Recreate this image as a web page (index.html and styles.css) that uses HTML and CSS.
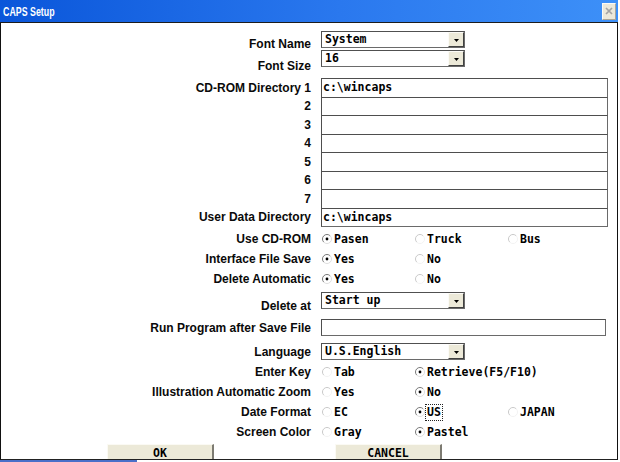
FILE: index.html
```html
<!DOCTYPE html>
<html>
<head>
<meta charset="utf-8">
<link rel="stylesheet" href="styles.css">
</head>
<body>
<div class="window">
  <div class="titlebar">
    <span class="title">CAPS Setup</span>
    <span class="close"><svg width="8" height="8" viewBox="0 0 8 8"><path d="M1 1L7 7M7 1L1 7" stroke="#a3a3a3" stroke-width="1.7"/></svg></span>
  </div>
  <div class="body">
    <div class="row sel r-fn"><span class="lbl low9">Font Name</span><div class="select"><span class="val">System</span><span class="arrow"><svg width="5" height="3" viewBox="0 0 5 3"><path d="M0 0H5L2.5 3Z" fill="#000"/></svg></span></div></div>
    <div class="row sel r-fs"><span class="lbl low14">Font Size</span><div class="select"><span class="val">16</span><span class="arrow"><svg width="5" height="3" viewBox="0 0 5 3"><path d="M0 0H5L2.5 3Z" fill="#000"/></svg></span></div></div>

    <div class="group">
      <div class="row fld"><span class="lbl">CD-ROM Directory 1</span><div class="field"><span class="val">c:\wincaps</span></div></div>
      <div class="row fld"><span class="lbl">2</span><div class="field"></div></div>
      <div class="row fld"><span class="lbl">3</span><div class="field"></div></div>
      <div class="row fld"><span class="lbl">4</span><div class="field"></div></div>
      <div class="row fld"><span class="lbl">5</span><div class="field"></div></div>
      <div class="row fld"><span class="lbl">6</span><div class="field"></div></div>
      <div class="row fld"><span class="lbl">7</span><div class="field"></div></div>
      <div class="row fld"><span class="lbl">User Data Directory</span><div class="field"><span class="val">c:\wincaps</span></div></div>
    </div>

    <div class="radios r-top1">
      <div class="row rad"><span class="lbl">Use CD-ROM</span>
        <span class="opt on"><svg class="rb" width="10" height="10" viewBox="0 0 10 10"><circle cx="5" cy="5" r="4.5" fill="#fff"/><path class="d" d="M1.8 8.2A4.5 4.5 0 0 1 8.2 1.8"/><path class="l" d="M8.2 1.8A4.5 4.5 0 0 1 1.8 8.2"/><circle class="dot" cx="5" cy="5" r="1.4"/></svg><span class="val">Pasen</span></span>
        <span class="opt"><svg class="rb" width="10" height="10" viewBox="0 0 10 10"><circle cx="5" cy="5" r="4.5" fill="#fff"/><path class="d" d="M1.8 8.2A4.5 4.5 0 0 1 8.2 1.8"/><path class="l" d="M8.2 1.8A4.5 4.5 0 0 1 1.8 8.2"/></svg><span class="val">Truck</span></span>
        <span class="opt"><svg class="rb" width="10" height="10" viewBox="0 0 10 10"><circle cx="5" cy="5" r="4.5" fill="#fff"/><path class="d" d="M1.8 8.2A4.5 4.5 0 0 1 8.2 1.8"/><path class="l" d="M8.2 1.8A4.5 4.5 0 0 1 1.8 8.2"/></svg><span class="val">Bus</span></span>
      </div>
      <div class="row rad"><span class="lbl">Interface File Save</span>
        <span class="opt on"><svg class="rb" width="10" height="10" viewBox="0 0 10 10"><circle cx="5" cy="5" r="4.5" fill="#fff"/><path class="d" d="M1.8 8.2A4.5 4.5 0 0 1 8.2 1.8"/><path class="l" d="M8.2 1.8A4.5 4.5 0 0 1 1.8 8.2"/><circle class="dot" cx="5" cy="5" r="1.4"/></svg><span class="val">Yes</span></span>
        <span class="opt"><svg class="rb" width="10" height="10" viewBox="0 0 10 10"><circle cx="5" cy="5" r="4.5" fill="#fff"/><path class="d" d="M1.8 8.2A4.5 4.5 0 0 1 8.2 1.8"/><path class="l" d="M8.2 1.8A4.5 4.5 0 0 1 1.8 8.2"/></svg><span class="val">No</span></span>
      </div>
      <div class="row rad"><span class="lbl">Delete Automatic</span>
        <span class="opt on"><svg class="rb" width="10" height="10" viewBox="0 0 10 10"><circle cx="5" cy="5" r="4.5" fill="#fff"/><path class="d" d="M1.8 8.2A4.5 4.5 0 0 1 8.2 1.8"/><path class="l" d="M8.2 1.8A4.5 4.5 0 0 1 1.8 8.2"/><circle class="dot" cx="5" cy="5" r="1.4"/></svg><span class="val">Yes</span></span>
        <span class="opt"><svg class="rb" width="10" height="10" viewBox="0 0 10 10"><circle cx="5" cy="5" r="4.5" fill="#fff"/><path class="d" d="M1.8 8.2A4.5 4.5 0 0 1 8.2 1.8"/><path class="l" d="M8.2 1.8A4.5 4.5 0 0 1 1.8 8.2"/></svg><span class="val">No</span></span>
      </div>
    </div>

    <div class="row sel r-da"><span class="lbl low11">Delete at</span><div class="select"><span class="val">Start up</span><span class="arrow"><svg width="5" height="3" viewBox="0 0 5 3"><path d="M0 0H5L2.5 3Z" fill="#000"/></svg></span></div></div>
    <div class="row sel r-run"><span class="lbl">Run Program after Save File</span><div class="field wide"></div></div>
    <div class="row sel r-lang"><span class="lbl">Language</span><div class="select"><span class="val">U.S.English</span><span class="arrow"><svg width="5" height="3" viewBox="0 0 5 3"><path d="M0 0H5L2.5 3Z" fill="#000"/></svg></span></div></div>

    <div class="radios r-top2">
      <div class="row rad"><span class="lbl">Enter Key</span>
        <span class="opt"><svg class="rb" width="10" height="10" viewBox="0 0 10 10"><circle cx="5" cy="5" r="4.5" fill="#fff"/><path class="d" d="M1.8 8.2A4.5 4.5 0 0 1 8.2 1.8"/><path class="l" d="M8.2 1.8A4.5 4.5 0 0 1 1.8 8.2"/></svg><span class="val">Tab</span></span>
        <span class="opt on wide"><svg class="rb" width="10" height="10" viewBox="0 0 10 10"><circle cx="5" cy="5" r="4.5" fill="#fff"/><path class="d" d="M1.8 8.2A4.5 4.5 0 0 1 8.2 1.8"/><path class="l" d="M8.2 1.8A4.5 4.5 0 0 1 1.8 8.2"/><circle class="dot" cx="5" cy="5" r="1.4"/></svg><span class="val">Retrieve(F5/F10)</span></span>
      </div>
      <div class="row rad"><span class="lbl">Illustration Automatic Zoom</span>
        <span class="opt"><svg class="rb" width="10" height="10" viewBox="0 0 10 10"><circle cx="5" cy="5" r="4.5" fill="#fff"/><path class="d" d="M1.8 8.2A4.5 4.5 0 0 1 8.2 1.8"/><path class="l" d="M8.2 1.8A4.5 4.5 0 0 1 1.8 8.2"/></svg><span class="val">Yes</span></span>
        <span class="opt on"><svg class="rb" width="10" height="10" viewBox="0 0 10 10"><circle cx="5" cy="5" r="4.5" fill="#fff"/><path class="d" d="M1.8 8.2A4.5 4.5 0 0 1 8.2 1.8"/><path class="l" d="M8.2 1.8A4.5 4.5 0 0 1 1.8 8.2"/><circle class="dot" cx="5" cy="5" r="1.4"/></svg><span class="val">No</span></span>
      </div>
      <div class="row rad"><span class="lbl">Date Format</span>
        <span class="opt"><svg class="rb" width="10" height="10" viewBox="0 0 10 10"><circle cx="5" cy="5" r="4.5" fill="#fff"/><path class="d" d="M1.8 8.2A4.5 4.5 0 0 1 8.2 1.8"/><path class="l" d="M8.2 1.8A4.5 4.5 0 0 1 1.8 8.2"/></svg><span class="val">EC</span></span>
        <span class="opt on"><svg class="rb" width="10" height="10" viewBox="0 0 10 10"><circle cx="5" cy="5" r="4.5" fill="#fff"/><path class="d" d="M1.8 8.2A4.5 4.5 0 0 1 8.2 1.8"/><path class="l" d="M8.2 1.8A4.5 4.5 0 0 1 1.8 8.2"/><circle class="dot" cx="5" cy="5" r="1.4"/></svg><span class="val focus">US</span></span>
        <span class="opt"><svg class="rb" width="10" height="10" viewBox="0 0 10 10"><circle cx="5" cy="5" r="4.5" fill="#fff"/><path class="d" d="M1.8 8.2A4.5 4.5 0 0 1 8.2 1.8"/><path class="l" d="M8.2 1.8A4.5 4.5 0 0 1 1.8 8.2"/></svg><span class="val">JAPAN</span></span>
      </div>
      <div class="row rad"><span class="lbl">Screen Color</span>
        <span class="opt"><svg class="rb" width="10" height="10" viewBox="0 0 10 10"><circle cx="5" cy="5" r="4.5" fill="#fff"/><path class="d" d="M1.8 8.2A4.5 4.5 0 0 1 8.2 1.8"/><path class="l" d="M8.2 1.8A4.5 4.5 0 0 1 1.8 8.2"/></svg><span class="val">Gray</span></span>
        <span class="opt on"><svg class="rb" width="10" height="10" viewBox="0 0 10 10"><circle cx="5" cy="5" r="4.5" fill="#fff"/><path class="d" d="M1.8 8.2A4.5 4.5 0 0 1 8.2 1.8"/><path class="l" d="M8.2 1.8A4.5 4.5 0 0 1 1.8 8.2"/><circle class="dot" cx="5" cy="5" r="1.4"/></svg><span class="val">Pastel</span></span>
      </div>
    </div>

    <div class="buttons">
      <span class="btn">OK</span>
      <span class="btn">CANCEL</span>
    </div>
  </div>
  <div class="under"><span class="seg"></span></div>
</div>
</body>
</html>
```
FILE: styles.css
```css
* { box-sizing: border-box; }
html, body { margin: 0; padding: 0; background: #fff; }
body {
  width: 620px;
  height: 462px;
  overflow: hidden;
  font-family: "Liberation Sans", Arial, sans-serif;
  color: #000;
}
.window { width: 618px; }
.titlebar {
  height: 23px;
  background: linear-gradient(to right, #0a56da 0%, #2a78ee 55%, #3d90f8 100%);
  border-bottom: 1px solid #1c1c1c;
  display: flex;
  align-items: center;
  justify-content: space-between;
  padding: 0 2px 0 3px;
}
.title {
  display: inline-block;
  color: #fff;
  font-weight: bold;
  font-size: 13px;
  line-height: 15px;
  padding-top: 1px;
  transform: scaleX(0.68);
  transform-origin: left center;
  white-space: nowrap;
}
.close {
  width: 14px;
  height: 17px;
  background: #ebe8da;
  border: 1px solid #fbfaf5;
  border-right-color: #aaa699;
  border-bottom-color: #aaa699;
  display: flex;
  align-items: center;
  justify-content: center;
}
.body {
  height: 437px;
  border-left: 1px solid #111;
  border-right: 1px solid #111;
  border-bottom: 1px solid #222;
  background: #fff;
  overflow: hidden;
}
.row { display: flex; align-items: center; }
.lbl {
  flex: none;
  width: 310px;
  margin-right: 10px;
  text-align: right;
  font-weight: bold;
  font-size: 12px;
  line-height: 14px;
  white-space: nowrap;
  color: #0a0a0a;
}
.low9 { padding-top: 9px; }
.low11 { padding-top: 11px; }
.low14 { padding-top: 14px; }
.val {
  font-family: "DejaVu Sans Mono", "Liberation Mono", monospace;
  font-weight: bold;
  font-size: 11.5px;
  line-height: 13px;
  white-space: nowrap;
}
.sel { height: 17px; }
.r-fn { margin-top: 8px; }
.r-fs { margin-top: 2px; }
.group { margin-top: 11px; }
.fld { height: 19.5px; }
.fld + .fld { margin-top: -1px; }
.field {
  width: 287px;
  height: 100%;
  border: 1px solid #4e4e4e;
  border-right-color: #6a6a6a;
  border-bottom-color: #6a6a6a;
  padding-left: 1px;
  display: flex;
  align-items: center;
  background: #fff;
}
.field.wide { width: 285px; }
.select {
  width: 144px;
  height: 17px;
  border: 1px solid #505050;
  border-right-color: #6a6a6a;
  border-bottom-color: #6a6a6a;
  display: flex;
  align-items: center;
  justify-content: space-between;
  padding-left: 3px;
  background: #fff;
}
.arrow {
  width: 16px;
  height: 15px;
  background: #ece9d8;
  border-top: 1px solid #fcfbf7;
  border-left: 1px solid #fcfbf7;
  border-right: 1px solid #404040;
  border-bottom: 1px solid #404040;
  display: flex;
  align-items: center;
  justify-content: center;
  padding-top: 1px;
}
.arrow svg { display: block; }
.radios.r-top1 { margin-top: 2px; }
.radios.r-top2 { margin-top: 2px; }
.rad { height: 20px; }
.opt {
  flex: none;
  width: 93px;
  display: flex;
  align-items: center;
  padding-left: 1px;
}
.opt.wide { width: 180px; }
.rb { flex: none; display: block; margin-right: 2px; }
.rb path { fill: none; stroke-width: 1; }
.rb .d { stroke: #c9c9c9; }
.rb .l { stroke: #f2f2f2; }
.opt.on .rb .d { stroke: #7a7a7a; }
.opt.on .rb .l { stroke: #dedede; }
.rb .dot { fill: #000; }
.focus { outline: 1px dotted #222; outline-offset: 1px; }
.r-da { margin-top: 3px; }
.r-run { margin-top: 10px; }
.r-lang { margin-top: 7px; }
.buttons {
  margin-top: 2px;
  display: flex;
  padding-left: 106px;
  gap: 121px;
}
.btn {
  width: 107px;
  height: 15px;
  background: #ece9d8;
  border-top: 1px solid #fbfaf4;
  border-left: 1px solid #fbfaf4;
  border-right: 2px solid #7d7b72;
  display: flex;
  align-items: center;
  justify-content: center;
  padding-top: 2px;
  font-family: "DejaVu Sans Mono", "Liberation Mono", monospace;
  font-weight: bold;
  font-size: 11.5px;
  line-height: 13px;
}
.under { height: 2px; display: flex; }
.under .seg { width: 137px; height: 2px; background: #4a6fc9; }
```
